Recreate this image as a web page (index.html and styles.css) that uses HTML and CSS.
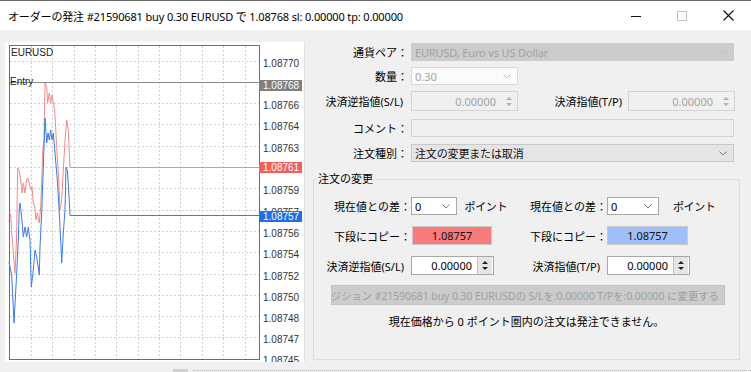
FILE: index.html
```html
<!DOCTYPE html>
<html lang="ja">
<head>
  <meta charset="UTF-8">
  <link rel="stylesheet" href="styles.css">
  <title>オーダーの発注</title>
</head>
<body>
  <header class="titlebar">
    <span class="title">オーダーの発注 #21590681 buy 0.30 EURUSD で 1.08768 sl: 0.00000 tp: 0.00000</span>
    <div class="controls">
      <span class="ctl"><svg width="10" height="10" viewBox="0 0 10 10"><path d="M0 5.5h10" stroke="#111" stroke-width="1"/></svg></span>
      <span class="ctl"><svg width="10" height="10" viewBox="0 0 10 10"><rect x="0.5" y="0.5" width="9" height="9" fill="none" stroke="#c4c4c4"/></svg></span>
      <span class="ctl"><svg width="11" height="11" viewBox="0 0 11 11"><path d="M0.5 0.5l10 10M10.5 0.5l-10 10" stroke="#111" stroke-width="1.1"/></svg></span>
    </div>
  </header>

  <main class="main">
    <!-- tick chart -->
    <section class="chart-panel">
      <svg width="300" height="320" viewBox="5 42 300 320" font-family="Liberation Sans, Arial, sans-serif" font-size="10">
        <defs>
          <clipPath id="above-bid"><rect x="259" y="200" width="46" height="11"/></clipPath>
        </defs>
        <rect x="5" y="42" width="300" height="320" fill="#fff"/>
        <line x1="304.5" y1="42" x2="304.5" y2="362" stroke="#e2e2e2"/>
        <g stroke="#cfcfcf" stroke-dasharray="2 2">
          <path d="M31.5 46V359M52.5 46V359M74.5 46V359M95.5 46V359M116.5 46V359M138.5 46V359M159.5 46V359M180.5 46V359M202.5 46V359M223.5 46V359M245.5 46V359"/>
          <path d="M10 61.5H259M10 103.5H259M10 124.5H259M10 146.5H259M10 167.5H259M10 188.5H259M10 210.5H259M10 231.5H259M10 252.5H259M10 274.5H259M10 295.5H259M10 316.5H259M10 337.5H259"/>
        </g>
        <line x1="9" y1="82.5" x2="259" y2="82.5" stroke="#8a8a8a"/>
        <polyline fill="none" stroke="#f28b8b" points="9,222 10.5,214 12,235 13.5,255 15,273 16.5,240 17.7,168 19.3,171.7 20.7,180 22,193 23.3,183 25,193 26.7,180 28,178 29.3,183 30.7,190 32,186.7 33.3,203 34.7,206.7 36,220 37.3,213 39.3,223 40.7,206.7 42,173 42.7,150 44,140 45,83 46.7,86.7 47.7,103 49.3,93 50.7,103 52,95 53.3,103 54.7,110 56.7,146.7 58.7,180 60,210 61.7,200 63.3,170 65.3,136.7 66.7,120 68.3,130 70,167.5 259,167.5"/>
        <polyline fill="none" stroke="#3d7be0" points="9,262 10,267 11.7,275 14,323 16.7,273 18.3,240 19.3,207 20,203 21.7,217 23.3,237 25,227 26.7,237 28.3,227 30,240 30.7,267 31.3,287 33.3,270 35,250 36.7,257 39.3,275 40,247 41.7,213 43.3,167 45,118 46.7,143 48,133 49.3,140 50.7,130 52,140 53.3,133 55,153 57.3,180 59.3,213 61.3,253 61.7,263 63.3,233 65,210 66,167 67.3,170 68.7,190 70,215.5 259,215.5"/>
        <rect x="9.5" y="45.5" width="250" height="314" fill="none" stroke="#6e6e6e"/>
        <text x="11" y="56" fill="#222">EURUSD</text>
        <text x="10" y="85" fill="#222">Entry</text>
        <g fill="#333">
          <text x="263" y="67">1.08770</text>
          <text x="263" y="109">1.08766</text>
          <text x="263" y="130">1.08764</text>
          <text x="263" y="152">1.08763</text>
          <text x="263" y="194">1.08759</text>
          <text x="263" y="216" clip-path="url(#above-bid)">1.08757</text>
          <text x="263" y="237">1.08756</text>
          <text x="263" y="258">1.08754</text>
          <text x="263" y="280">1.08752</text>
          <text x="263" y="301">1.08750</text>
          <text x="263" y="322">1.08748</text>
          <text x="263" y="343">1.08747</text>
          <text x="263" y="364">1.08745</text>
        </g>
        <rect x="259" y="80" width="43" height="11" fill="#808080"/>
        <text x="263" y="89" fill="#fff">1.08768</text>
        <rect x="259" y="162" width="43" height="11" fill="#f0605c"/>
        <text x="263" y="171" fill="#fff">1.08761</text>
        <rect x="259" y="211" width="43" height="11" fill="#1f6fe6"/>
        <text x="263" y="220" fill="#fff">1.08757</text>
      </svg>
    </section>

    <section class="form">
      <div class="row r1">
        <span class="lbl">通貨ペア：</span>
        <div class="combo off full">EURUSD, Euro vs US Dollar<svg class="chev" width="8" height="5" viewBox="0 0 8 5"><path d="M0.5 0.5L4 4L7.5 0.5" fill="none" stroke="#bdbdbd"/></svg></div>
      </div>
      <div class="row r2">
        <span class="lbl">数量：</span>
        <div class="combo lite small">0.30<svg class="chev" width="8" height="5" viewBox="0 0 8 5"><path d="M0.5 0.5L4 4L7.5 0.5" fill="none" stroke="#bdbdbd"/></svg></div>
      </div>
      <div class="row r3">
        <span class="lbl sl">決済逆指値(S/L)</span>
        <div class="num off small">
          <span class="val">0.00000</span>
          <span class="spin"><i class="up"></i><i class="down"></i></span>
        </div>
        <span class="lbl tp">決済指値(T/P)</span>
        <div class="num off small">
          <span class="val">0.00000</span>
          <span class="spin"><i class="up"></i><i class="down"></i></span>
        </div>
      </div>
      <div class="row r4">
        <span class="lbl">コメント：</span>
        <div class="field off full"></div>
      </div>
      <div class="row r5">
        <span class="lbl">注文種別：</span>
        <div class="combo btn full">注文の変更または取消<svg class="chev" width="8" height="5" viewBox="0 0 8 5"><path d="M0.5 0.5L4 4L7.5 0.5" fill="none" stroke="#7a7a7a"/></svg></div>
      </div>

      <div class="group">
        <span class="group-title">注文の変更</span>

        <div class="grow ga">
          <div class="half left">
            <span class="glbl">現在値との差：</span>
            <div class="combo white pts">0<svg class="chev" width="8" height="5" viewBox="0 0 8 5"><path d="M0.5 0.5L4 4L7.5 0.5" fill="none" stroke="#7a7a7a"/></svg></div>
            <span class="unit">ポイント</span>
          </div>
          <div class="half right">
            <span class="glbl">現在値との差：</span>
            <div class="combo white pts">0<svg class="chev" width="8" height="5" viewBox="0 0 8 5"><path d="M0.5 0.5L4 4L7.5 0.5" fill="none" stroke="#7a7a7a"/></svg></div>
            <span class="unit wide">ポイント</span>
          </div>
        </div>

        <div class="grow gb">
          <div class="half left">
            <span class="glbl">下段にコピー：</span>
            <button class="copy red">1.08757</button>
          </div>
          <div class="half right">
            <span class="glbl">下段にコピー：</span>
            <button class="copy blue">1.08757</button>
          </div>
        </div>

        <div class="grow gc">
          <div class="half left">
            <span class="glbl pad">決済逆指値(S/L)</span>
            <div class="num white">
              <span class="val">0.00000</span>
              <span class="spin on"><i class="up"></i><i class="down"></i></span>
            </div>
          </div>
          <div class="half right">
            <span class="glbl pad">決済指値(T/P)</span>
            <div class="num white">
              <span class="val">0.00000</span>
              <span class="spin on"><i class="up"></i><i class="down"></i></span>
            </div>
          </div>
        </div>

        <div class="modify"><span>ポジション #21590681 buy 0.30 EURUSDの S/Lを:0.00000 T/Pを:0.00000 に変更する</span></div>
        <p class="notice">現在価格から 0 ポイント圏内の注文は発注できません。</p>
      </div>
    </section>
  </main>

  <footer class="strip">
    <span class="tab"></span>
    <span class="dots"></span>
  </footer>
</body>
</html>
```

FILE: styles.css
```css
* {
  box-sizing: border-box;
}

body {
  margin: 0;
  width: 751px;
  height: 372px;
  overflow: hidden;
  background-color: #f0f0f0;
  font-family: "Noto Sans", "Noto Sans CJK JP", sans-serif;
  font-size: 11px;
  color: #000;
  display: flex;
  flex-direction: column;
}

/* title bar */
.titlebar {
  height: 30px;
  flex: none;
  background-color: #fff;
  border-top: 1px solid #6a6a6a;
  display: flex;
  align-items: center;
  padding-left: 8px;
}

.title {
  flex: 1;
  font-size: 11px;
  letter-spacing: -0.15px;
  white-space: nowrap;
  color: #000;
}

.controls {
  display: flex;
}

.ctl {
  width: 46px;
  height: 29px;
  display: flex;
  align-items: center;
  justify-content: center;
}

/* main area */
.main {
  height: 332px;
  flex: none;
  display: flex;
}

.chart-panel {
  width: 300px;
  height: 320px;
  margin: 12px 0 0 5px;
}

.chart-panel svg {
  display: block;
}

.form {
  width: 440px;
  margin-left: 6px;
  display: flex;
  flex-direction: column;
}

.row {
  display: flex;
  align-items: center;
  height: 18px;
}

.r1 { margin-top: 13px; }
.r2 { margin-top: 6px; }
.r3 { margin-top: 6px; height: 20px; }
.r4 { margin-top: 8px; }
.r5 { margin-top: 7px; }

.lbl {
  width: 97px;
  flex: none;
  text-align: right;
  white-space: nowrap;
  margin-right: 3px;
}

.lbl.sl {
  padding-right: 5px;
}

.lbl.tp {
  width: 110px;
  padding-right: 6px;
  margin-right: 0;
}

/* controls */
.combo,
.num,
.field {
  height: 100%;
  display: flex;
  align-items: center;
  border: 1px solid #d9d9d9;
  white-space: nowrap;
}

.combo {
  padding-left: 3px;
}

.combo.full {
  letter-spacing: -0.15px;
}

.chev {
  margin-left: auto;
  margin-right: 6px;
}

.full { width: 323px; }
.small { width: 107px; }

.off {
  background-color: #f0f0f0;
  color: #a3a3a3;
  border-color: #d4d4d4;
}

.combo.off {
  background-color: #cccccc;
  border-color: #cccccc;
}

.combo.lite {
  background-color: #fbfbfb;
  color: #a3a3a3;
  border-color: #d9d9d9;
}

.combo.btn {
  background-color: #e5e5e5;
  border-color: #c8c8c8;
  color: #111;
}

.white {
  background-color: #fff;
  border-color: #a8a8a8;
}

.num {
  padding-right: 1px;
}

.num .val {
  flex: 1;
  text-align: right;
  padding-right: 5px;
}

.spin {
  width: 15px;
  height: 100%;
  display: flex;
  flex-direction: column;
  align-items: center;
  justify-content: center;
  gap: 3px;
}

.spin i {
  width: 0;
  height: 0;
  border-left: 3px solid transparent;
  border-right: 3px solid transparent;
}

.spin .up {
  border-bottom: 3px solid #b0b0b0;
}

.spin .down {
  border-top: 3px solid #b0b0b0;
}

.spin.on {
  background-color: #e6e6e6;
  border-left: 1px solid #c2c2c2;
}

.spin.on .up {
  border-bottom-color: #222;
}

.spin.on .down {
  border-top-color: #222;
}

/* group box */
.group {
  margin: 17px 0 0 2px;
  width: 427px;
  height: 181px;
  border: 1px solid #dcdcdc;
  display: flex;
  flex-direction: column;
}

.group-title {
  align-self: flex-start;
  margin: -9px 0 0 3px;
  padding: 0 1px;
  line-height: 16px;
  background-color: #f0f0f0;
}

.grow {
  display: flex;
}

.ga { margin-top: 10px; height: 18px; }
.gb { margin-top: 11px; height: 19px; }
.gc { margin-top: 11px; height: 19px; }

.half {
  display: flex;
  align-items: center;
  height: 100%;
}

.half.left { width: 193px; }

.glbl {
  width: 97px;
  flex: none;
  text-align: right;
  white-space: nowrap;
}

.half.left .glbl { width: 97px; }
.half.right .glbl { width: 100px; }

.glbl.pad {
  padding-right: 7px;
}

.pts {
  width: 52px;
}

.unit {
  margin-left: 8px;
  white-space: nowrap;
  letter-spacing: -0.4px;
}

.unit.wide {
  margin-left: 14px;
}

.copy {
  height: 100%;
  width: 80px;
  margin: 0 0 0 1px;
  padding: 0;
  border: 1px solid #c9c9c9;
  font: inherit;
  color: #111;
}

.copy.red { background-color: #f77b7b; }
.copy.blue { width: 81px; margin-left: 0; background-color: #a0bff6; }

.half .num {
  width: 83px;
}

.modify {
  margin: 10px 14px 0 17px;
  height: 20px;
  background-color: #cccccc;
  border: 1px solid #c4c4c4;
  color: #9f9f9f;
  font-size: 10.5px;
  letter-spacing: -0.1px;
  display: flex;
  align-items: center;
  justify-content: flex-end;
  overflow: hidden;
  white-space: nowrap;
  padding-right: 5px;
}

.notice {
  margin: 9px 0 0;
  line-height: 16px;
  text-align: center;
}

/* bottom edge of the next pane */
.strip {
  flex: 1;
  display: flex;
  align-items: flex-end;
}

.tab {
  width: 15px;
  height: 3px;
  margin-left: 173px;
  background-color: #d2d2d2;
}

.dots {
  flex: 1;
  margin-left: 5px;
  border-top: 1px dotted #b8b8b8;
  margin-bottom: 1px;
}
```
